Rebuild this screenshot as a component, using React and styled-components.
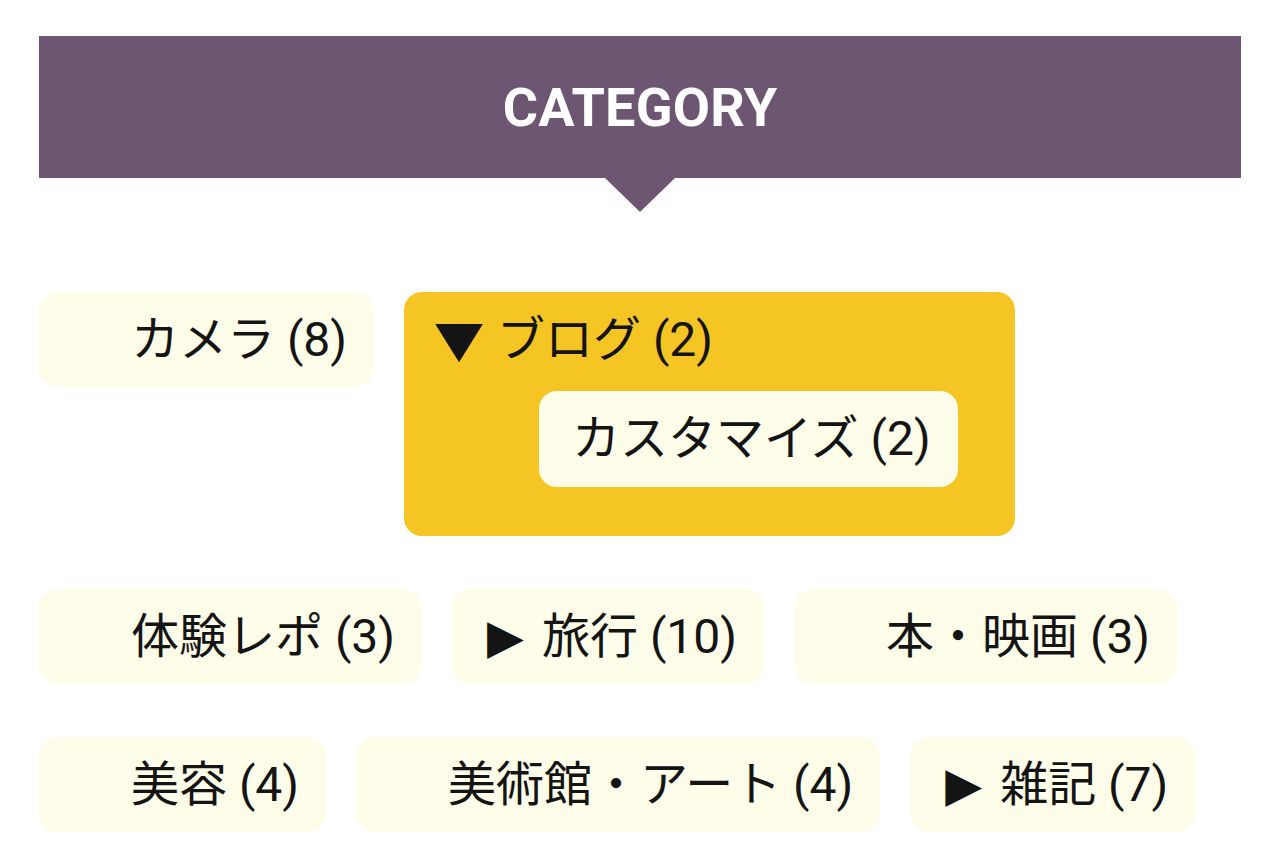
import React from 'react';
import styled, { createGlobalStyle } from 'styled-components';

const colors = {
	purple: '#6d5671',
	cream: '#fdfdea',
	yellow: '#f5c523',
	ink: '#141414',
};

const GlobalStyle = createGlobalStyle`
	body {
		margin: 0;
		background: #fff;
		font-family: Roboto, "Noto Sans CJK JP", sans-serif;
		color: ${colors.ink};
	}
`;

// styles
const Widget = styled.section`
	padding: 36px 39px;
`;

const Heading = styled.h2`
	position: relative;
	margin: 0;
	height: 142px;
	display: flex;
	align-items: center;
	justify-content: center;
	background: ${colors.purple};
	color: #fff;
	font-family: Roboto, sans-serif;
	font-weight: 700;
	font-size: 54px;
	letter-spacing: 0.2px;
	&::after {
		content: '';
		position: absolute;
		left: 50%;
		top: 100%;
		transform: translateX(-50%);
		border-left: 35px solid transparent;
		border-right: 35px solid transparent;
		border-top: 34px solid ${colors.purple};
	}
`;

const ChipList = styled.ul`
	list-style: none;
	margin: 114px 0 0;
	padding: 0;
	display: flex;
	flex-wrap: wrap;
	align-items: flex-start;
	column-gap: 30px;
	row-gap: 53px;
`;

const Chip = styled.li`
	background: ${colors.cream};
	border-radius: 18px;
	font-size: 48px;
	line-height: 47px;
	padding: 24px 27px 24px ${(p) => (p.$leaf ? '92px' : '35px')};
	white-space: nowrap;
`;

const OpenChip = styled.li`
	background: ${colors.yellow};
	border-radius: 18px;
	font-size: 48px;
	line-height: 47px;
	padding: 24px 57px 49px 31px;
	white-space: nowrap;
`;

const SubList = styled.ul`
	list-style: none;
	margin: 28px 0 0 104px;
	padding: 0;
	display: flex;
`;

const SubChip = styled.li`
	background: ${colors.cream};
	border-radius: 18px;
	padding: 24px 27px 25px 33px;
`;

const Marker = styled.span`
	display: inline-block;
	width: ${(p) => (p.$open ? '62px' : '55px')};
	font-family: "DejaVu Sans", sans-serif;
	font-size: ${(p) => (p.$open ? '50px' : '48px')};
	vertical-align: top;
	${(p) => p.$open && 'transform: scaleX(1.25); transform-origin: left center;'}
`;

const categories = [
	{ name: 'カメラ', count: 8 },
	{
		name: 'ブログ',
		count: 2,
		open: true,
		children: [{ name: 'カスタマイズ', count: 2 }],
	},
	{ name: '体験レポ', count: 3 },
	{ name: '旅行', count: 10, children: [] },
	{ name: '本・映画', count: 3 },
	{ name: '美容', count: 4 },
	{ name: '美術館・アート', count: 4 },
	{ name: '雑記', count: 7, children: [] },
];

const App = () => (
	<>
		<GlobalStyle />
		<Widget>
			<Heading>CATEGORY</Heading>
			<ChipList>
				{categories.map((c) => {
					const label = `${c.name} (${c.count})`;
					if (c.open) {
						return (
							<OpenChip key={c.name}>
								<Marker $open>▼</Marker>
								{label}
								<SubList>
									{c.children.map((s) => (
										<SubChip key={s.name}>
											{s.name} ({s.count})
										</SubChip>
									))}
								</SubList>
							</OpenChip>
						);
					}
					return (
						<Chip key={c.name} $leaf={!c.children}>
							{c.children && <Marker>▶</Marker>}
							{label}
						</Chip>
					);
				})}
			</ChipList>
		</Widget>
	</>
);

export default App;
